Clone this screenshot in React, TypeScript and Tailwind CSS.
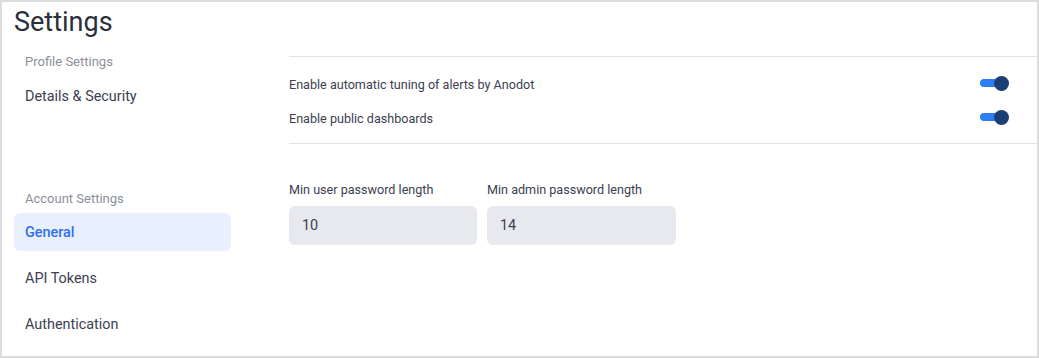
import React from "react";

function Toggle() {
  return (
    <div className="relative w-[29px] h-[15px] flex items-center -translate-y-[2px]">
      <div className="absolute left-0 w-[22px] h-[8px] rounded-full bg-[#2e7cf6]" />
      <div className="absolute right-0 w-[15px] h-[15px] rounded-full bg-[#1b3f72]" />
    </div>
  );
}

export default function App() {
  const font = { fontFamily: "Roboto, 'Liberation Sans', sans-serif" };
  return (
    <div
      className="w-[1039px] h-[358px] border-2 border-[#dcdcdc] bg-white box-border overflow-hidden text-[#3b4150]"
      style={font}
    >
      <div className="h-[38px] pl-[12px] flex items-center">
        <h1 className="text-[27px] leading-[34px] mt-[2px] text-[#2a2f3a] font-normal">Settings</h1>
      </div>
      <div className="flex">
        <div className="w-[217px] ml-[12px] pt-[7px] flex flex-col">
          <div className="h-[30px] flex items-center px-[11px] text-[13px] text-[#8b909a]">Profile Settings</div>
          <div className="h-[38px] pt-[1px] flex items-center px-[11px] text-[14.4px]">Details &amp; Security</div>
          <div className="h-[30px] mt-[68px] pt-[2px] flex items-center px-[11px] text-[13px] text-[#8b909a]">Account Settings</div>
          <div className="h-[38px] pt-[1px] flex items-center px-[11px] text-[14.4px] rounded-[6px] bg-[#e8f0fe] text-[#2f6ff0] font-medium">General</div>
          <div className="h-[38px] mt-[8px] pt-[1px] flex items-center px-[11px] text-[14.4px]">API Tokens</div>
          <div className="h-[38px] mt-[8px] pt-[1px] flex items-center px-[11px] text-[14.4px]">Authentication</div>
        </div>
        <div className="flex-1 ml-[58px] pt-[16px] flex flex-col">
          <div className="h-px bg-[#e3e4ea]" />
          <div className="mt-[10px] h-[34px] pt-[2px] flex items-center justify-between pr-[28px] text-[12.6px]">
            <span>Enable automatic tuning of alerts by Anodot</span>
            <Toggle />
          </div>
          <div className="h-[34px] pt-[2px] flex items-center justify-between pr-[28px] text-[12.6px]">
            <span>Enable public dashboards</span>
            <Toggle />
          </div>
          <div className="mt-[8px] h-px bg-[#e3e4ea]" />
          <div className="mt-[35px] flex gap-[10px]">
            <div className="w-[188px] flex flex-col">
              <label className="h-[20px] pt-[2px] flex items-center text-[12.6px]">Min user password length</label>
              <div className="mt-[7px] h-[39px] pt-[1px] rounded-[6px] bg-[#e8e9ee] flex items-center px-[13px] text-[14.4px]">10</div>
            </div>
            <div className="w-[189px] flex flex-col">
              <label className="h-[20px] pt-[2px] flex items-center text-[12.6px]">Min admin password length</label>
              <div className="mt-[7px] h-[39px] pt-[1px] rounded-[6px] bg-[#e8e9ee] flex items-center px-[13px] text-[14.4px]">14</div>
            </div>
          </div>
        </div>
      </div>
    </div>
  );
}
